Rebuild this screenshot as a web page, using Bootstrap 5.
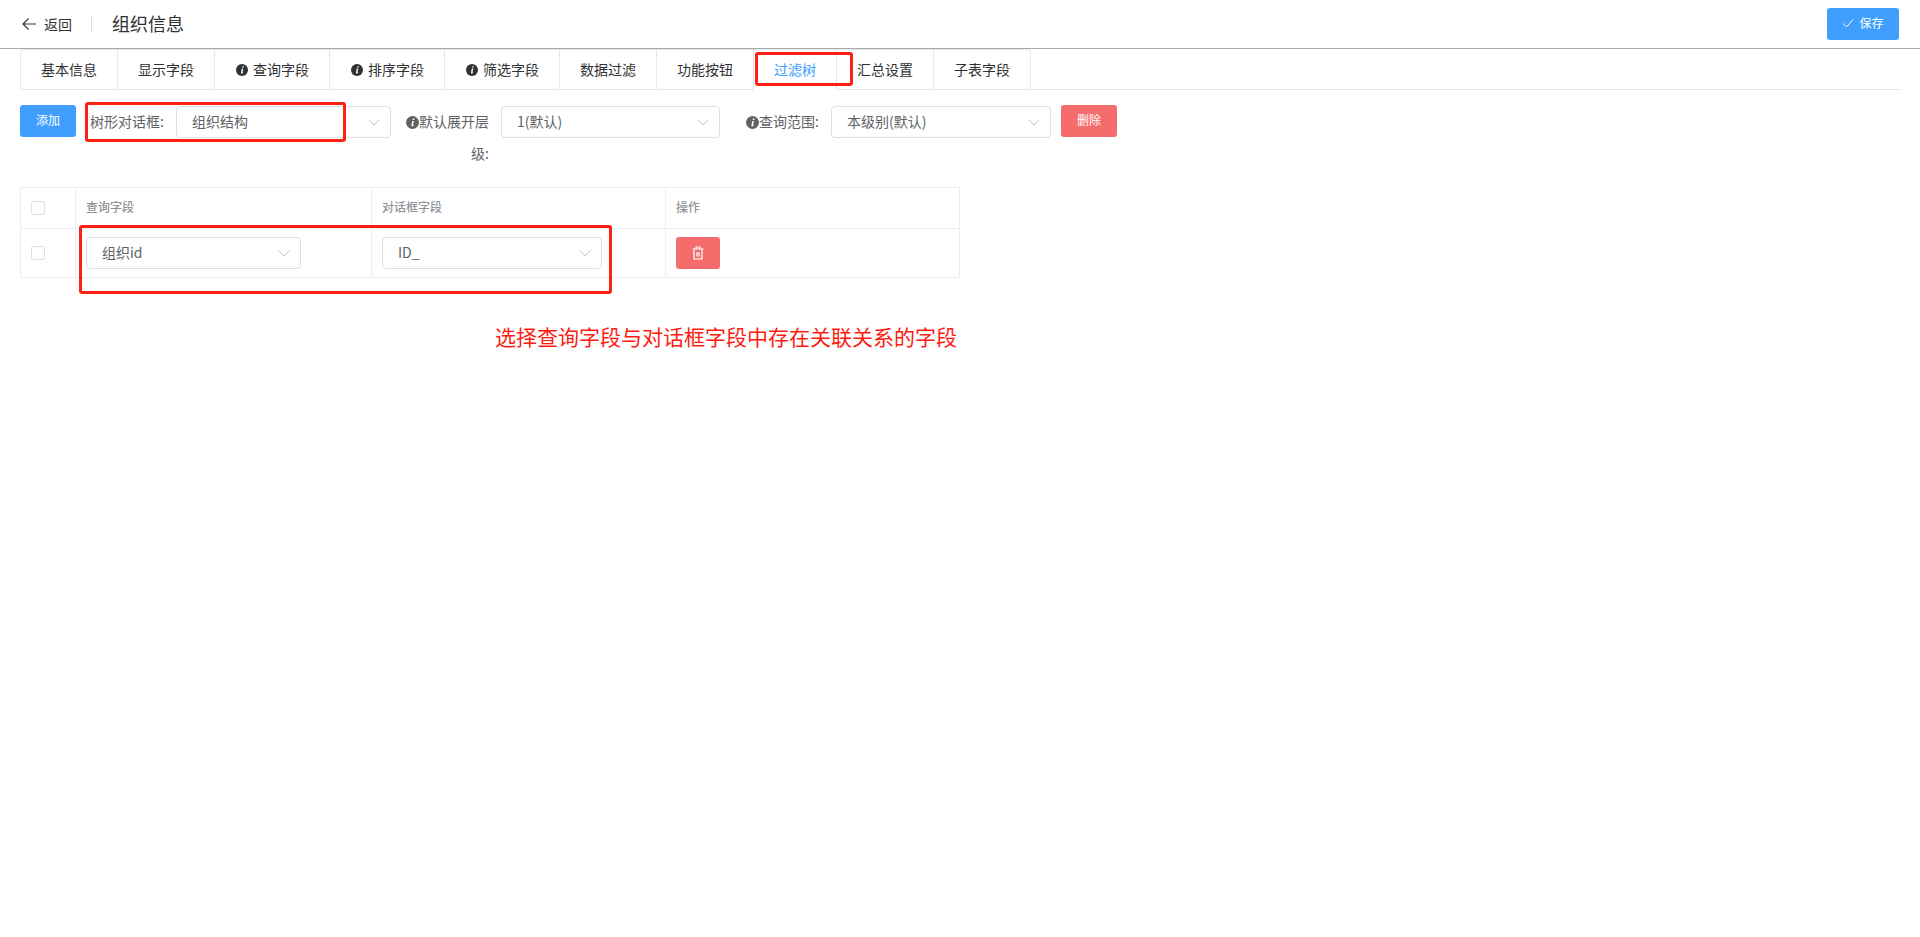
<!DOCTYPE html>
<html lang="zh-CN">
<head>
<meta charset="utf-8">
<title>组织信息</title>
<link href="https://cdn.jsdelivr.net/npm/bootstrap@5.3.0/dist/css/bootstrap.min.css" rel="stylesheet">
<style>
html,body{height:100%}
body{font-family:"Noto Sans CJK SC","Liberation Sans",sans-serif;font-size:14px;color:#303133;background:#fff;position:relative;overflow:hidden}
.topbar{height:49px;border-bottom:1px solid #aaa;padding:8px 21px 8px 22px}
.back-link{color:#303133;text-decoration:none;line-height:32px;font-size:14px}
.back-sep{width:1px;height:16px;background:#dcdfe6;margin:0 20px 0 19px}
.page-title{font-size:18px;font-weight:400;margin:0;line-height:31px;padding-bottom:1px;color:#303133}
.btn-save,.btn-add,.btn-del{height:32px;border:0;border-radius:3px;color:#fff;font-size:12px;padding:0 0 2px;display:inline-flex;align-items:center;justify-content:center}
.btn-save,.btn-add{background:#409eff}
.btn-save:hover,.btn-add:hover{background:#409eff;color:#fff}
.btn-del,.btn-del:hover{background:#f56c6c;color:#fff}
.btn-save{width:72px;gap:5px}
.btn-add,.btn-del.wide{width:56px}
.btn-del.narrow{width:44px;padding:0}
.tabbar{margin:0 20px;border-bottom:1px solid #e4e7ed;height:41px}
.tabset{border:1px solid #e4e7ed;border-bottom:0;border-radius:4px 4px 0 0;height:41px;width:1011px;list-style:none;margin:0;padding:0}
.tabitem{height:38px;padding:0 20px 2px;border-left:1px solid #e4e7ed;color:#303133;white-space:nowrap;display:flex;align-items:center;gap:5px;box-sizing:content-box}
.tabitem:first-child{border-left:0}
.tabitem.on{color:#409eff;height:39px;background:#fff;position:relative}
.ico-i{width:13px;height:13px;flex:none}
.tabitem .ico-i{width:12px;height:12px;margin:2px 0 0 1px}
.formrow{margin:15px 0 0 20px;align-items:flex-start}
.field-label{color:#606266;text-align:right;padding-right:12px;line-height:32px;flex:none}
.field-label .ico-i{vertical-align:-2px}
.l1{width:100px}.l2{width:101px;margin-left:9px}.l3{width:100px;margin-left:11px}
.sel.form-select{height:32px;border:1px solid #dcdfe6;border-radius:4px;color:#606266;font-size:14px;line-height:28px;padding:0 30px 2px 15px;box-shadow:none;flex:none;
background-image:url("data:image/svg+xml,%3Csvg xmlns='http://www.w3.org/2000/svg' viewBox='0 0 14 14'%3E%3Cpath d='M1.500 4.500 7 10l5.500-5.500' fill='none' stroke='%23c0c4cc' stroke-width='1'/%3E%3C/svg%3E");
background-size:14px 14px;background-position:right 9px center}
.formrow>.sel{margin-top:1px}
.s1{width:215px}.s2{width:219px}.s3{width:220px}
.btn-del.wide{margin-left:10px}
.btn-add{flex:none}
.grid-wrap{width:940px;margin:18px 0 0 20px}
.table.datagrid{table-layout:fixed;border-color:#ebeef5;margin:0;width:940px;font-size:14px}
.datagrid th,.datagrid td{border:1px solid #ebeef5;padding:0 10px;vertical-align:middle}
.datagrid th{height:41px;font-size:12px;font-weight:500;color:#909399;padding-bottom:2px}
.datagrid td{height:48px;padding-top:8px;padding-bottom:8px}
.datagrid .c0{width:55px}.datagrid .c1{width:296px}.datagrid .c2{width:294px}
.tick-box{width:14px;height:14px;border:1px solid #dcdfe6;border-radius:2px;display:block;background:#fff}
.datagrid th .tick-box{margin-top:2px}
.sel.cell1{width:215px}.sel.cell2{width:220px}
.anno{position:absolute;border:3px solid #ff2015;border-radius:3px;pointer-events:none}
.a-tab{left:755px;top:52px;width:98px;height:34px}
.a-tree{left:85px;top:102px;width:261px;height:40px}
.a-row{left:79px;top:225px;width:533px;height:69px}
.anno-text{position:absolute;left:495px;top:320px;font-size:21px;line-height:32px;color:#ff1a10;white-space:nowrap}
</style>
</head>
<body>
<header class="topbar d-flex align-items-center justify-content-between">
  <div class="d-flex align-items-center">
    <a class="back-link d-flex align-items-center gap-2" href="#">
      <svg width="14" height="14" viewBox="0 0 14 14" fill="none" stroke="#303133" stroke-width="1.1"><path d="M14 7H1M6.500 1.500 1 7l5.500 5.500"/></svg>
      <span>返回</span>
    </a>
    <span class="back-sep"></span>
    <h1 class="page-title">组织信息</h1>
  </div>
  <button class="btn btn-save" type="button">
    <svg width="12" height="12" viewBox="0 0 12 12" fill="none" stroke="#fff" stroke-width="1"><path d="M1 6.500 4.500 10 11 2.500"/></svg>
    <span>保存</span>
  </button>
</header>

<div class="tabbar">
  <ul class="tabset d-flex">
    <li class="tabitem">基本信息</li>
    <li class="tabitem">显示字段</li>
    <li class="tabitem"><svg class="ico-i" viewBox="0 0 12 12"><circle cx="6" cy="6" r="6" fill="#303133"/><path d="M6.400 2.200h1.500l-.3 1.400H6.100zM5.800 4.600h1.500L6.500 8.300c0 .3.300.3.800.1l-.1.700c-1.300.6-2.400.4-2.200-.6z" fill="#fff"/></svg>查询字段</li>
    <li class="tabitem"><svg class="ico-i" viewBox="0 0 12 12"><circle cx="6" cy="6" r="6" fill="#303133"/><path d="M6.400 2.200h1.500l-.3 1.400H6.100zM5.800 4.600h1.500L6.500 8.300c0 .3.300.3.800.1l-.1.700c-1.300.6-2.400.4-2.200-.6z" fill="#fff"/></svg>排序字段</li>
    <li class="tabitem"><svg class="ico-i" viewBox="0 0 12 12"><circle cx="6" cy="6" r="6" fill="#303133"/><path d="M6.400 2.200h1.500l-.3 1.400H6.100zM5.800 4.600h1.500L6.500 8.300c0 .3.300.3.800.1l-.1.700c-1.300.6-2.400.4-2.200-.6z" fill="#fff"/></svg>筛选字段</li>
    <li class="tabitem">数据过滤</li>
    <li class="tabitem">功能按钮</li>
    <li class="tabitem on">过滤树</li>
    <li class="tabitem">汇总设置</li>
    <li class="tabitem">子表字段</li>
  </ul>
</div>

<div class="formrow d-flex">
  <button class="btn btn-add" type="button">添加</button>
  <div class="field-label l1">树形对话框:</div>
  <select class="form-select sel s1"><option>组织结构</option></select>
  <div class="field-label l2"><svg class="ico-i" viewBox="0 0 12 12"><circle cx="6" cy="6" r="6" fill="#606266"/><path d="M6.400 2.200h1.500l-.3 1.400H6.100zM5.800 4.600h1.500L6.500 8.300c0 .3.300.3.800.1l-.1.700c-1.300.6-2.400.4-2.200-.6z" fill="#fff"/></svg>默认展开层级:</div>
  <select class="form-select sel s2"><option>1(默认)</option></select>
  <div class="field-label l3"><svg class="ico-i" viewBox="0 0 12 12"><circle cx="6" cy="6" r="6" fill="#606266"/><path d="M6.400 2.200h1.500l-.3 1.400H6.100zM5.800 4.600h1.500L6.500 8.300c0 .3.300.3.800.1l-.1.700c-1.300.6-2.400.4-2.200-.6z" fill="#fff"/></svg>查询范围:</div>
  <select class="form-select sel s3"><option>本级别(默认)</option></select>
  <button class="btn btn-del wide" type="button">删除</button>
</div>

<div class="grid-wrap">
  <table class="table datagrid">
    <thead>
      <tr><th class="c0"><span class="tick-box"></span></th><th class="c1">查询字段</th><th class="c2">对话框字段</th><th>操作</th></tr>
    </thead>
    <tbody>
      <tr>
        <td><span class="tick-box"></span></td>
        <td><select class="form-select sel cell1"><option>组织id</option></select></td>
        <td><select class="form-select sel cell2"><option>ID_</option></select></td>
        <td><button class="btn btn-del narrow" type="button" aria-label="删除">
          <svg width="12" height="14" viewBox="0 0 12 14" fill="none" stroke="#fff" stroke-width="1.200"><path d="M.5 3h11M4 3V1h4v2M2 3v10h8V3M5 6v4.500M7 6v4.500"/></svg>
        </button></td>
      </tr>
    </tbody>
  </table>
</div>

<div class="anno a-tab"></div>
<div class="anno a-tree"></div>
<div class="anno a-row"></div>
<div class="anno-text">选择查询字段与对话框字段中存在关联关系的字段</div>
<script src="https://cdn.jsdelivr.net/npm/bootstrap@5.3.0/dist/js/bootstrap.bundle.min.js"></script>
</body>
</html>
